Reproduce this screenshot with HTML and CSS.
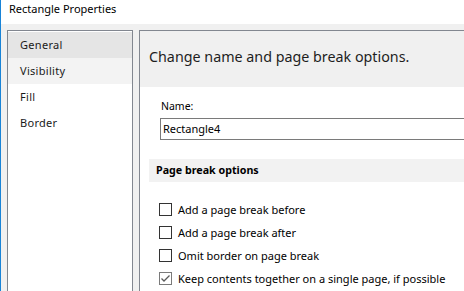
FILE: index.html
```html
<!DOCTYPE html>
<html>
<head>
<meta charset="utf-8">
<link rel="stylesheet" href="styles.css">
</head>
<body>
<div class="window">
  <div class="titlebar">Rectangle Properties</div>
  <div class="main">
    <nav class="nav">
      <div class="nav-item selected">General</div>
      <div class="nav-item hover">Visibility</div>
      <div class="nav-item">Fill</div>
      <div class="nav-item">Border</div>
    </nav>
    <section class="panel">
      <div class="panel-header">Change name and page break options.</div>
      <div class="panel-body">
        <label class="field-label">Name:</label>
        <div class="text-input">Rectangle4</div>
        <div class="section-header">Page break options</div>
        <div class="checks">
          <div class="check-row"><span class="box"></span><span>Add a page break before</span></div>
          <div class="check-row"><span class="box"></span><span>Add a page break after</span></div>
          <div class="check-row"><span class="box"></span><span>Omit border on page break</span></div>
          <div class="check-row"><span class="box checked"><svg width="11" height="11" viewBox="0 0 11 11"><path d="M1.5 5.5 L4 8 L9.5 2.5" fill="none" stroke="#5a5a5a" stroke-width="1.3"/></svg></span><span>Keep contents together on a single page, if possible</span></div>
        </div>
      </div>
    </section>
  </div>
</div>
</body>
</html>
```
FILE: styles.css
```css
html, body {
  margin: 0;
  padding: 0;
}
body {
  font-family: "Noto Sans", "Open Sans", sans-serif;
  font-size: 11px;
  color: #000;
  overflow: hidden;
}
.window {
  width: 463px;
  height: 291px;
  border-left: 1px solid #1883d7;
  background: #f0f0f0;
  display: flex;
  flex-direction: column;
  overflow: hidden;
}
.titlebar {
  height: 24px;
  flex-shrink: 0;
  background: #fff;
  padding-left: 8px;
  line-height: 18px;
  font-size: 11px;
  color: #000;
}
.main {
  flex: 1;
  display: flex;
  gap: 6px;
  padding: 6px 0 0 6px;
  min-height: 0;
}
.nav {
  width: 124px;
  flex-shrink: 0;
  border: 1px solid #828790;
  border-bottom: none;
  background: #fff;
  padding-top: 1px;
}
.nav-item {
  height: 26px;
  line-height: 25px;
  padding-left: 12px;
  font-size: 11px;
  color: #1a1a1a;
  letter-spacing: 0.3px;
}
.nav-item.selected {
  background: #e5e5e5;
}
.nav-item.hover {
  background: #f3f3f3;
}
.panel {
  width: 360px;
  flex-shrink: 0;
  border-left: 1px solid #828790;
  border-top: 1px solid #828790;
  background: #fff;
  display: flex;
  flex-direction: column;
}
.panel-header {
  height: 56px;
  background: #f0f0f0;
  padding-left: 9px;
  line-height: 52px;
  font-size: 14.3px;
  color: #1e1e1e;
}
.panel-body {
  padding-left: 9px;
}
.field-label {
  display: block;
  margin-top: 11px;
  padding-left: 12px;
  line-height: 16px;
  font-size: 10.5px;
}
.text-input {
  margin-top: 4px;
  margin-left: 11px;
  height: 20px;
  border: 1px solid #7a7a7a;
  line-height: 20px;
  padding-left: 2px;
  font-size: 11px;
}
.section-header {
  margin-top: 19px;
  height: 23px;
  background: #f2f2f2;
  padding-left: 7px;
  line-height: 23px;
  font-weight: bold;
  font-size: 10.7px;
}
.checks {
  margin-top: 16px;
  padding-left: 10px;
}
.check-row {
  height: 23px;
  display: flex;
  align-items: center;
  gap: 6px;
  font-size: 11px;
}
.box {
  width: 11px;
  height: 11px;
  border: 1px solid #333;
  background: #fff;
  display: flex;
  align-items: center;
  justify-content: center;
  flex-shrink: 0;
}
.box.checked {
  border-color: #7a7a7a;
}
```
